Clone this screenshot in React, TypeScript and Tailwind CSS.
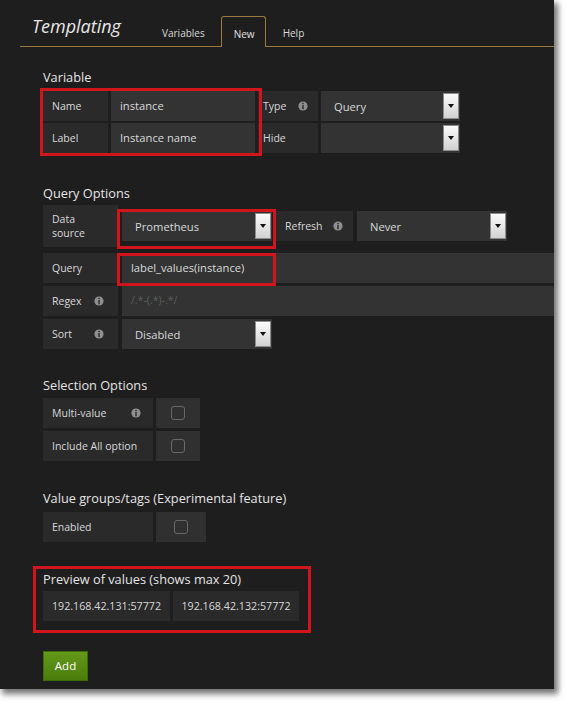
import React from "react";

const Info = () => (
  <svg width="10" height="10" viewBox="0 0 10 10" className="shrink-0">
    <circle cx="5" cy="5" r="4.6" fill="#8f8f8f" />
    <rect x="4.3" y="1.8" width="1.4" height="1.3" fill="#2a2a2a" />
    <rect x="4.3" y="3.9" width="1.4" height="4.3" fill="#2a2a2a" />
  </svg>
);

const DropBtn = () => (
  <div className="absolute right-[1px] top-[2px] bottom-[2px] w-[16px] border border-[#8c8c8c] bg-gradient-to-b from-[#fbfbfb] to-[#d2d2d2] flex items-center justify-center">
    <div className="w-0 h-0 border-l-[3.5px] border-r-[3.5px] border-t-[4px] border-l-transparent border-r-transparent border-t-[#111] mb-[1px]" />
  </div>
);

function Label({
  w,
  h = "h-[30px]",
  children,
  info,
  pr = "pr-[10px]",
  pl = "pl-[9px]",
}: {
  w: string;
  h?: string;
  children: React.ReactNode;
  info?: boolean;
  pr?: string;
  pl?: string;
}) {
  return (
    <div
      className={`${w} ${h} ${pl} ${pr} shrink-0 bg-[#2a2a2a] flex items-center justify-between text-[10.5px] text-[#d8d9da]`}
    >
      <span className="leading-[14px]">{children}</span>
      {info ? <Info /> : null}
    </div>
  );
}

function Select({ w, children }: { w: string; children?: React.ReactNode }) {
  return (
    <div
      className={`${w} h-[30px] relative shrink-0 bg-[#333333] flex items-center pl-[13px] text-[11.2px] text-[#d8d9da]`}
    >
      <span className="pt-[2px]">{children}</span>
      <DropBtn />
    </div>
  );
}

function Input({
  w,
  children,
  placeholder,
}: {
  w: string;
  children?: React.ReactNode;
  placeholder?: boolean;
}) {
  return (
    <div
      className={`${w} h-[30px] shrink-0 bg-[#333333] flex items-center pl-[9px] ${
        placeholder ? "text-[10.5px] text-[#5e5e5e]" : "text-[11.2px] text-[#d8d9da]"
      }`}
    >
      {children}
    </div>
  );
}

const Check = ({ w }: { w: string }) => (
  <div className={`${w} h-[30px] shrink-0 bg-[#303030] flex items-center justify-center`}>
    <div className="w-[14px] h-[14px] rounded-[3px] border border-[#686868]" />
  </div>
);

const Header = ({ children, cls }: { children: React.ReactNode; cls: string }) => (
  <div className={`h-[16px] leading-[16px] text-[12.75px] text-[#e4e4e4] ${cls}`}>{children}</div>
);

const RedBox = ({ cls }: { cls: string }) => (
  <div className={`absolute border-[3px] border-[#d2141c] pointer-events-none ${cls}`} />
);

export default function App() {
  return (
    <div className="w-[568px] h-[704px] bg-white overflow-hidden font-['Open_Sans','Noto_Sans',sans-serif]">
      <div className="relative w-[554px] h-[689px] bg-[#1f1e1e] shadow-[3px_4px_6px_1px_rgba(0,0,0,0.55)] overflow-hidden">
        {/* header */}
        <div className="ml-[20px] mt-[17px] h-[30px] flex items-end border-b border-[#9c7a3c]">
          <div className="w-[130px] pl-[12px] text-[18px] italic leading-[24px] mb-[8px] text-[#e6e6e6]">
            Templating
          </div>
          <div className="h-[30px] pl-[12px] pr-[12px] flex items-center pt-[4px] text-[10px] text-[#d8d9da]">
            Variables
          </div>
          <div className="h-[31px] ml-[4px] pl-[12px] pr-[10px] flex items-center pt-[5px] text-[10px] text-[#e0e0e0] border border-b-0 border-[#9c7a3c] rounded-t-[3px] bg-[#1f1e1e] mb-[-1px]">
            New
          </div>
          <div className="h-[30px] ml-[5px] px-[12px] flex items-center pt-[4px] text-[10px] text-[#d8d9da]">Help</div>
        </div>

        <div className="pl-[43px]">
          {/* Variable */}
          <Header cls="mt-[22px] mb-[6px]">Variable</Header>
          <div className="flex flex-col gap-[2px]">
            <div className="flex gap-[3px]">
              <Label w="w-[65px]">Name</Label>
              <Input w="w-[144px]">instance</Input>
              <Label w="w-[60px]" pl="pl-[5px]" info>
                Type
              </Label>
              <Select w="w-[139px]">Query</Select>
            </div>
            <div className="flex gap-[3px]">
              <Label w="w-[65px]">Label</Label>
              <Input w="w-[144px]">Instance name</Input>
              <Label w="w-[60px]" pl="pl-[5px]">
                Hide
              </Label>
              <Select w="w-[139px]" />
            </div>
          </div>

          {/* Query options */}
          <Header cls="mt-[32px] mb-[4px]">Query Options</Header>
          <div className="flex items-center gap-[4px]">
            <Label w="w-[75px]" h="h-[42px]">
              Data
              <br />
              source
            </Label>
            <Select w="w-[150px]">Prometheus</Select>
            <Label w="w-[77px]" info>
              Refresh
            </Label>
            <Select w="w-[150px]">Never</Select>
          </div>
          <div className="flex flex-col gap-[3px] mt-[6px]">
            <div className="flex gap-[4px]">
              <Label w="w-[75px]">Query</Label>
              <Input w="w-[440px]">label_values(instance)</Input>
            </div>
            <div className="flex gap-[4px]">
              <Label w="w-[75px]" pr="pr-[14px]" info>
                Regex
              </Label>
              <Input w="w-[440px]" placeholder>
                /.*-(.*)-.*/
              </Input>
            </div>
            <div className="flex gap-[4px]">
              <Label w="w-[75px]" pr="pr-[14px]" info>
                Sort
              </Label>
              <Select w="w-[150px]">Disabled</Select>
            </div>
          </div>

          {/* Selection options */}
          <Header cls="mt-[28px] mb-[5px]">Selection Options</Header>
          <div className="flex flex-col gap-[3px]">
            <div className="flex gap-[3px]">
              <Label w="w-[110px]" pr="pr-[12px]" info>
                Multi-value
              </Label>
              <Check w="w-[44px]" />
            </div>
            <div className="flex gap-[3px]">
              <Label w="w-[110px]">Include All option</Label>
              <Check w="w-[44px]" />
            </div>
          </div>

          {/* Value groups */}
          <Header cls="mt-[29px] mb-[6px]">Value groups/tags (Experimental feature)</Header>
          <div className="flex gap-[3px]">
            <Label w="w-[110px]">Enabled</Label>
            <Check w="w-[50px]" />
          </div>

          {/* Preview */}
          <Header cls="mt-[29px] mb-[4px]">Preview of values (shows max 20)</Header>
          <div className="flex gap-[3px]">
            <div className="w-[127px] h-[30px] bg-[#2a2a2a] flex items-center justify-center text-[10.7px] text-[#d8d9da]">
              192.168.42.131:57772
            </div>
            <div className="w-[126px] h-[30px] bg-[#2a2a2a] flex items-center justify-center text-[10.7px] text-[#d8d9da]">
              192.168.42.132:57772
            </div>
          </div>

          <button className="mt-[30px] w-[45px] h-[30px] bg-gradient-to-b from-[#64991a] to-[#4b7c0c] border border-[#3f6a08] text-[11.5px] text-white flex items-center justify-center">
            Add
          </button>
        </div>

        <RedBox cls="left-[40px] top-[88px] w-[222px] h-[68px]" />
        <RedBox cls="left-[117px] top-[209px] w-[159px] h-[40px]" />
        <RedBox cls="left-[117px] top-[253px] w-[159px] h-[33px]" />
        <RedBox cls="left-[33px] top-[566px] w-[278px] h-[67px]" />
      </div>
    </div>
  );
}
